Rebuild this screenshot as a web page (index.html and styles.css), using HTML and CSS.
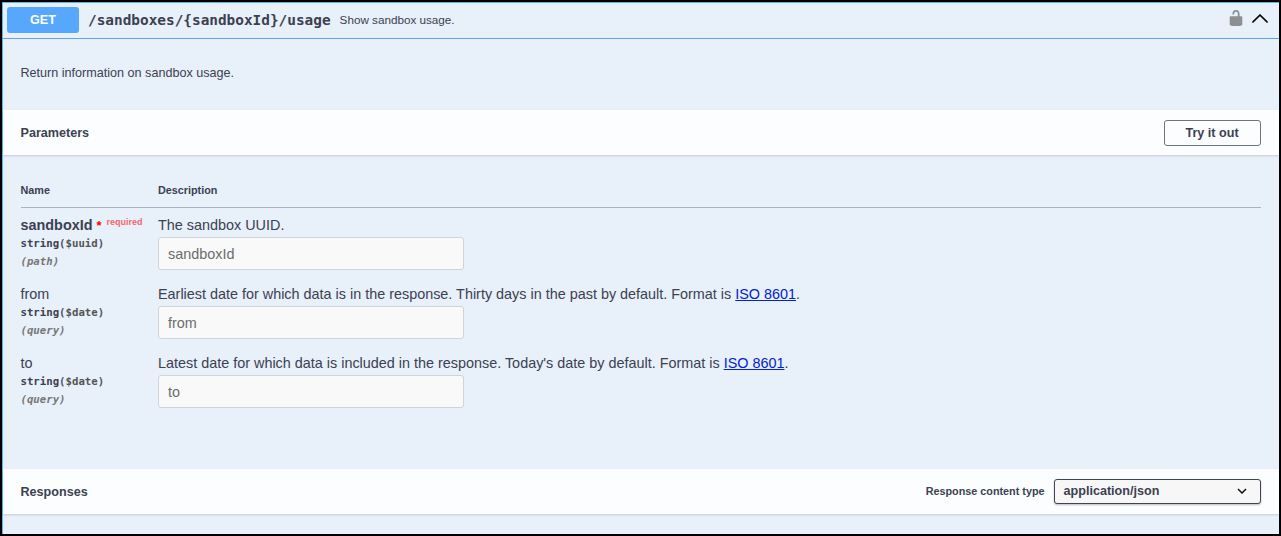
FILE: index.html
```html
<!DOCTYPE html>
<html lang="en">
<head>
    <meta charset="UTF-8">
    <meta name="viewport" content="width=device-width, initial-scale=1.0">
    <title>Sandbox usage</title>
    <link rel="stylesheet" href="styles.css">
</head>
<body>

    <div class="opblock">
        <div class="opblock-summary">
            <span class="method">GET</span>
            <span class="path">/sandboxes/{sandboxId}/usage</span>
            <span class="summary-text">Show sandbox usage.</span>
            <svg class="lock" width="18" height="18" viewBox="0 0 20 20">
                <path d="M15.8 8H14V5.6C14 2.703 12.665 1 10 1 7.334 1 6 2.703 6 5.6V6h2v-.801C8 3.754 8.797 3 10 3c1.203 0 2 .754 2 2.199V8H4c-.553 0-1 .646-1 1.199V17c0 .549.428 1.139.951 1.307l1.197.387C5.672 18.861 6.55 19 7.1 19h5.8c.549 0 1.428-.139 1.951-.307l1.196-.387c.524-.167.953-.757.953-1.306V9.199C17 8.646 16.352 8 15.8 8z"/>
            </svg>
            <svg class="arrow" width="18" height="18" viewBox="0 0 20 20">
                <path d="M17.418 14.908c.272.281.701.281.973 0s.27-.736 0-1.02l-7.908-7.83a.697.697 0 0 0-.969 0l-7.908 7.83c-.27.284-.27.739 0 1.02.272.281.701.281.973 0L10 7.767l7.418 7.141z"/>
            </svg>
        </div>

        <div class="description">Return information on sandbox usage.</div>

        <div class="section-header">
            <h4>Parameters</h4>
            <button class="try-out">Try it out</button>
        </div>

        <div class="parameters">
            <table>
                <thead>
                    <tr>
                        <th class="col-name">Name</th>
                        <th>Description</th>
                    </tr>
                </thead>
                <tbody>
                    <tr>
                        <td>
                            <div class="param-name required">sandboxId <span class="star">*</span> <span class="flag">required</span></div>
                            <div class="param-type">string<span class="format">($uuid)</span></div>
                            <div class="param-in">(path)</div>
                        </td>
                        <td>
                            <p>The sandbox UUID.</p>
                            <input type="text" placeholder="sandboxId">
                        </td>
                    </tr>
                    <tr>
                        <td>
                            <div class="param-name">from</div>
                            <div class="param-type">string<span class="format">($date)</span></div>
                            <div class="param-in">(query)</div>
                        </td>
                        <td>
                            <p>Earliest date for which data is in the response. Thirty days in the past by default. Format is <a href="#">ISO 8601</a>.</p>
                            <input type="text" placeholder="from">
                        </td>
                    </tr>
                    <tr>
                        <td>
                            <div class="param-name">to</div>
                            <div class="param-type">string<span class="format">($date)</span></div>
                            <div class="param-in">(query)</div>
                        </td>
                        <td>
                            <p>Latest date for which data is included in the response. Today's date by default. Format is <a href="#">ISO 8601</a>.</p>
                            <input type="text" placeholder="to">
                        </td>
                    </tr>
                </tbody>
            </table>
        </div>

        <div class="section-header">
            <h4>Responses</h4>
            <div class="content-type">
                <span class="content-label">Response content type</span>
                <div class="select">
                    <span>application/json</span>
                    <svg width="10" height="6" viewBox="0 0 10 6">
                        <path d="M1 1l4 4 4-4"/>
                    </svg>
                </div>
            </div>
        </div>
    </div>

</body>
</html>
```
FILE: styles.css
```css
* {
    box-sizing: border-box;
}

body {
    margin: 0;
    height: 536px;
    border: 2px solid #000;
    overflow: hidden;
    font-family: "Liberation Sans", Arial, sans-serif;
    color: #3b4151;
}

.opblock {
    height: 532px;
    border: 1px solid #61affe;
    border-right: 0;
    border-bottom: 0;
    background: #e8f0fa;
}

/* Summary bar */
.opblock-summary {
    display: flex;
    align-items: center;
    height: 36px;
    padding: 0 10px 2px 4px;
    border-bottom: 1px solid #61a5e8;
}

.method {
    width: 72px;
    height: 26px;
    line-height: 26px;
    border-radius: 3px;
    background: #57a8fc;
    color: #fff;
    font-size: 12.6px;
    font-weight: bold;
    text-align: center;
}

.path {
    margin-left: 9px;
    font-family: "DejaVu Sans Mono", monospace;
    font-size: 14.4px;
    font-weight: bold;
}

.summary-text {
    flex: 1;
    margin-left: 9px;
    font-size: 11.7px;
}

.lock {
    margin: -3px 6px 0 0;
    fill: #8c9091;
}

.arrow {
    margin-top: -3px;
    fill: #000;
    stroke: #000;
    stroke-width: 0.4;
}

.description {
    height: 71px;
    padding: 26px 17.5px 0;
    font-size: 12.6px;
    line-height: 16px;
}

/* Section bars */
.section-header {
    display: flex;
    align-items: center;
    justify-content: space-between;
    height: 45px;
    padding: 0 18px 0 17.5px;
    background: #fbfdfe;
    box-shadow: 0 1px 2px rgba(0, 0, 0, 0.15);
}

.section-header h4 {
    margin: 0;
    font-size: 12.6px;
}

.try-out {
    width: 97px;
    height: 26px;
    padding: 0 1px 0 0;
    border: 1px solid #6f7480;
    border-radius: 3px;
    background: transparent;
    color: #3b4151;
    font-family: inherit;
    font-size: 12.6px;
    font-weight: bold;
}

/* Parameters */
.parameters {
    height: 314px;
    padding: 18px 18px 0 17.5px;
}

table {
    width: 100%;
    border-collapse: separate;
    border-spacing: 0;
}

th {
    height: 35px;
    padding: 0;
    border-bottom: 1px solid #a9b2bf;
    font-size: 10.8px;
    text-align: left;
}

.col-name {
    width: 137.5px;
}

td {
    height: 69px;
    padding: 8px 0 0;
    vertical-align: top;
}

.param-name {
    height: 19px;
    font-size: 14.4px;
    line-height: 18px;
    white-space: nowrap;
}

.required {
    font-weight: bold;
}

.star {
    color: #f00;
    font-size: 13px;
}

.flag {
    position: relative;
    top: -5px;
    margin-left: 1px;
    color: #f5666b;
    font-size: 9px;
    line-height: 1;
}

.param-type,
.param-in {
    font-family: "DejaVu Sans Mono", monospace;
    font-size: 10.7px;
    font-weight: bold;
    line-height: 18px;
}

.format {
    color: #555;
}

.param-in {
    color: #777;
    font-style: italic;
}

td p {
    margin: 0;
    font-size: 14.4px;
    line-height: 18px;
}

a {
    color: #0022d0;
}

input {
    display: block;
    width: 306px;
    height: 33px;
    margin-top: 3px;
    padding: 1px 9px 0;
    border: 1px solid #d0d3d8;
    border-radius: 3px;
    background: #f9f9f9;
    font-family: inherit;
    font-size: 14.4px;
}

input::placeholder {
    color: #6c6c6c;
}

/* Response content type */
.content-type {
    display: flex;
    align-items: center;
}

.content-label {
    margin: -2px 9.5px 0 0;
    font-size: 10.8px;
    font-weight: bold;
}

.select {
    display: flex;
    align-items: center;
    justify-content: space-between;
    width: 207px;
    height: 25px;
    padding: 0 13px 1px 8.5px;
    border: 1px solid #41444e;
    border-radius: 3px;
    background: #f7f7f7;
    box-shadow: 0 1px 2px rgba(0, 0, 0, 0.25);
    font-size: 12.6px;
    font-weight: bold;
}

.select svg {
    fill: none;
    stroke: #111;
    stroke-width: 1.5;
}
```
